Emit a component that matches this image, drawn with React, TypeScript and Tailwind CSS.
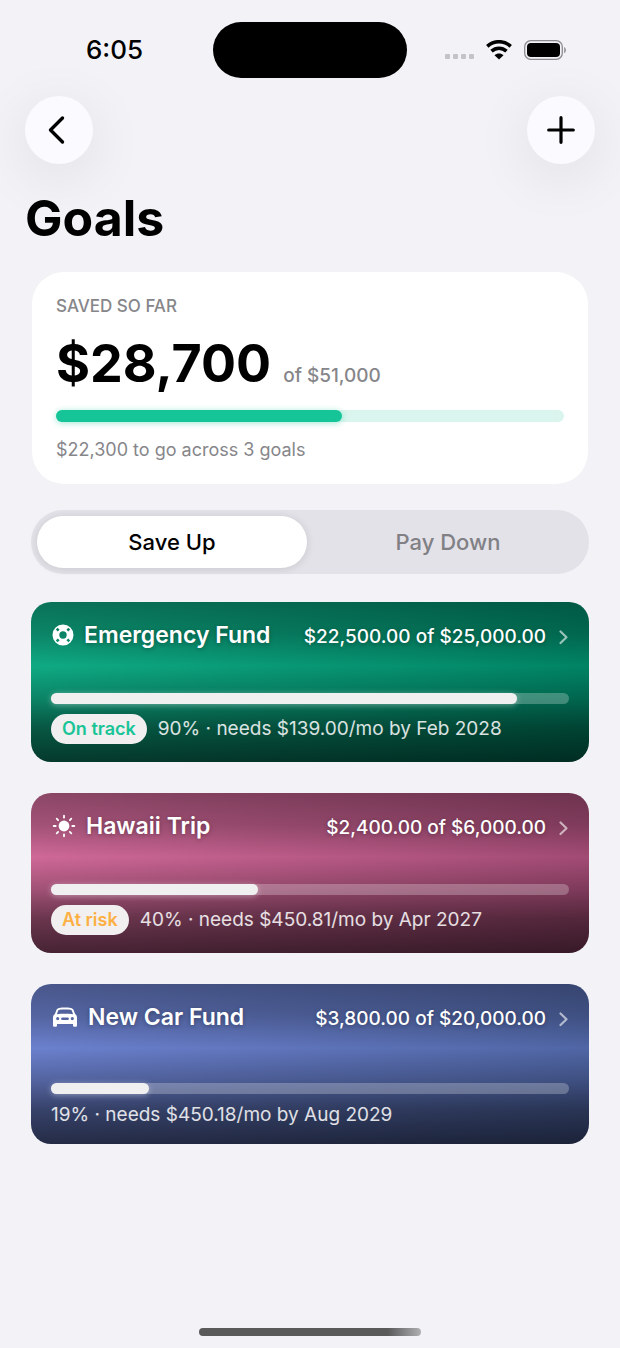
import React, { useState } from "react";
import clsx from "clsx";

type Goal = {
    name: string;
    icon: React.ReactNode;
    amount: string;
    percent: number;
    detail: string;
    status?: { label: string; className: string };
    background: string;
};

// Filled disc with the ring hole and the four strap notches cut out
const LifebuoyIcon = () => (
    <svg width="22" height="22" viewBox="0 0 22 22" aria-hidden="true">
        <path
            fill="white"
            fillRule="evenodd"
            d="M11 .5a10.500 10.500 0 1 1 0 21a10.500 10.500 0 0 1 0-21Z
               M11 7.300a3.700 3.700 0 1 0 0 7.400a3.700 3.700 0 0 0 0-7.400Z
               M5.600 3.800L7.600 5.700L5.700 7.600L3.800 5.600Z
               M16.400 3.800L18.200 5.600L16.300 7.600L14.400 5.700Z
               M3.800 16.400L5.700 14.400L7.600 16.300L5.600 18.200Z
               M18.200 16.400L16.400 18.200L14.400 16.300L16.300 14.400Z"
        />
    </svg>
);

const SunIcon = () => (
    <svg width="24" height="24" viewBox="0 0 24 24" aria-hidden="true">
        <circle cx="12" cy="12" r="5.400" fill="white" />
        <path
            stroke="white"
            strokeWidth="1.800"
            strokeLinecap="round"
            d="M12 1.700v2M12 20.300v2M1.700 12h2M20.300 12h2M4.700 4.700l1.400 1.400M17.900 17.900l1.400 1.400M4.700 19.300l1.400-1.400M17.900 6.100l1.400-1.400"
        />
    </svg>
);

const CarIcon = () => (
    <svg width="26" height="22" viewBox="0 0 26 22" aria-hidden="true">
        <path
            fill="white"
            fillRule="evenodd"
            d="M7.200 1.900C10.500 1.400 15.500 1.400 18.800 1.900C20.200 2.100 21.100 2.800 21.600 4.100L23 7.700C24.400 8.900 25 10.100 25 11.800V19.500A1.300 1.300 0 0 1 23.700 20.800H22.300A1.300 1.300 0 0 1 21 19.500V18H5V19.500A1.300 1.300 0 0 1 3.700 20.800H2.300A1.300 1.300 0 0 1 1 19.500V11.800C1 10.100 1.600 8.900 3 7.700L4.400 4.100C4.900 2.800 5.800 2.100 7.200 1.900Z
               M7.500 3.700C6.700 3.800 6.300 4.200 6 5L4.900 8.200C10 7.600 16 7.600 21.100 8.200L20 5C19.700 4.200 19.300 3.800 18.500 3.700C15.500 3.300 10.500 3.300 7.500 3.700Z
               M5.700 11a1.600 1.600 0 1 0 0 3.200a1.600 1.600 0 0 0 0-3.200Z
               M20.300 11a1.600 1.600 0 1 0 0 3.200a1.600 1.600 0 0 0 0-3.200Z
               M10.300 11.500a1.200 1.200 0 0 0 0 2.400H15.700a1.200 1.200 0 0 0 0-2.400Z"
        />
    </svg>
);

const goals: Goal[] = [
    {
        name: "Emergency Fund",
        icon: <LifebuoyIcon />,
        amount: "$22,500.00 of $25,000.00",
        percent: 90,
        detail: "90% · needs $139.00/mo by Feb 2028",
        status: { label: "On track", className: "text-[#19c497]" },
        background:
            "bg-[linear-gradient(to_bottom,rgba(0,0,0,.33),rgba(0,0,0,.22)_20%,transparent_40%,rgba(0,0,0,.22)_60%,rgba(0,0,0,.48)_78%,rgba(0,0,0,.66)),linear-gradient(100deg,#0fab84,#008263)]",
    },
    {
        name: "Hawaii Trip",
        icon: <SunIcon />,
        amount: "$2,400.00 of $6,000.00",
        percent: 40,
        detail: "40% · needs $450.81/mo by Apr 2027",
        status: { label: "At risk", className: "text-[#fdb044]" },
        background:
            "bg-[linear-gradient(to_bottom,rgba(0,0,0,.33),rgba(0,0,0,.22)_20%,transparent_40%,rgba(0,0,0,.22)_60%,rgba(0,0,0,.48)_78%,rgba(0,0,0,.66)),linear-gradient(100deg,#d06998,#a14a73)]",
    },
    {
        name: "New Car Fund",
        icon: <CarIcon />,
        amount: "$3,800.00 of $20,000.00",
        percent: 19,
        detail: "19% · needs $450.18/mo by Aug 2029",
        background:
            "bg-[linear-gradient(to_bottom,rgba(0,0,0,.33),rgba(0,0,0,.22)_20%,transparent_40%,rgba(0,0,0,.22)_60%,rgba(0,0,0,.48)_78%,rgba(0,0,0,.66)),linear-gradient(100deg,#6c81cf,#4f65a4)]",
    },
];

const StatusBar = () => (
    <div className="grid grid-cols-[1fr_194px_1fr] items-center pt-[22px] text-black">
        <div className="pl-4 text-center text-[26px] leading-8 font-medium">6:05</div>
        <div className="h-14 rounded-full bg-black" />
        <div className="flex items-center justify-center gap-3 pr-4">
            <div className="flex gap-[3px] pt-3">
                <span className="size-[5px] rounded-[1px] bg-[#c3c3c8]" />
                <span className="size-[5px] rounded-[1px] bg-[#c3c3c8]" />
                <span className="size-[5px] rounded-[1px] bg-[#c3c3c8]" />
                <span className="size-[5px] rounded-[1px] bg-[#c3c3c8]" />
            </div>
            <svg width="26" height="20" viewBox="0 0 26 20" fill="none" aria-hidden="true">
                <path d="M1.300 6.300C8 .2 18 .2 24.700 6.300" stroke="black" strokeWidth="3.600" />
                <path d="M5.500 11.200C10 7.200 16 7.200 20.500 11.200" stroke="black" strokeWidth="3.600" />
                <path d="M13 19.500L8.500 15.300C11 13 15 13 17.500 15.300Z" fill="black" />
            </svg>
            <svg width="43" height="20" viewBox="0 0 43 20" fill="none" aria-hidden="true">
                <rect x=".7" y=".7" width="37.600" height="18.600" rx="6" stroke="#8c8c90" strokeWidth="1.300" />
                <rect x="3" y="3" width="33" height="14" rx="4" fill="black" />
                <path d="M40.200 7v6.200c2.200-1 2.200-5.200 0-6.200Z" fill="#8c8c90" />
            </svg>
        </div>
    </div>
);

const GoalCard = ({ goal }: { goal: Goal }) => (
    <a
        href="#"
        className={clsx(
            "flex min-h-[160px] flex-col justify-between rounded-[20px] px-5 pt-[18px] pb-[18px] text-white",
            goal.background
        )}
    >
        <div className="flex items-center justify-between">
            <h2 className="flex items-center gap-[10px] pl-px text-[23px] leading-[30px] font-semibold [text-shadow:0_1px_4px_rgba(0,0,0,.3)]">
                {goal.icon}
                {goal.name}
            </h2>
            <div className="flex items-center gap-3 pt-1 text-[19px] leading-6 font-medium">
                <span className="[text-shadow:0_1px_4px_rgba(0,0,0,.3)]">{goal.amount}</span>
                <svg width="11" height="16" viewBox="0 0 11 16" fill="none" aria-hidden="true">
                    <path d="M2.500 2.500L8.500 8.300L2.500 14" stroke="white" strokeOpacity=".6" strokeWidth="2.200" strokeLinecap="round" strokeLinejoin="round" />
                </svg>
            </div>
        </div>

        <div>
            <div
                role="progressbar"
                aria-label={goal.name}
                aria-valuenow={goal.percent}
                className="h-[11px] rounded-full bg-white/25"
            >
                <div
                    className="h-full rounded-full bg-[#f0f0f0] shadow-[0_1px_6px_rgba(255,255,255,.4)]"
                    style={{ width: `${goal.percent}%` }}
                />
            </div>
            <div className="mt-[10px] flex items-center gap-[11px] text-[19px] text-white/85">
                {goal.status && (
                    <span
                        className={clsx(
                            "rounded-full bg-[#f1efef] px-[11px] text-[18px] leading-[30px] font-semibold",
                            goal.status.className
                        )}
                    >
                        {goal.status.label}
                    </span>
                )}
                <span className="leading-[22px]">{goal.detail}</span>
            </div>
        </div>
    </a>
);

export default function App() {
    const [tab, setTab] = useState("Save Up");

    return (
        <div className="flex min-h-screen flex-col bg-[#f2f2f7] font-['Inter',sans-serif] text-black">
            <StatusBar />

            {/* Nav buttons */}
            <header className="px-[25px] pt-[18px]">
                <div className="flex justify-between">
                    <button aria-label="Back" className="flex size-[68px] items-center justify-center rounded-full bg-[#fafaff] shadow-[0_12px_60px_rgba(0,0,0,.09)]">
                        <svg width="28" height="32" viewBox="0 0 28 32" fill="none" aria-hidden="true">
                            <path d="M17.500 4L5.500 16L17.500 28" stroke="black" strokeWidth="3.400" strokeLinecap="round" strokeLinejoin="round" />
                        </svg>
                    </button>
                    <button aria-label="Add goal" className="flex size-[68px] items-center justify-center rounded-full bg-[#fafaff] shadow-[0_12px_60px_rgba(0,0,0,.09)]">
                        <svg width="28" height="28" viewBox="0 0 28 28" fill="none" aria-hidden="true">
                            <path d="M14 1.700v24.600M1.700 14h24.600" stroke="black" strokeWidth="3.200" strokeLinecap="round" />
                        </svg>
                    </button>
                </div>
                <h1 className="mt-6 text-[50px] leading-[60px] font-bold">Goals</h1>
            </header>

            <main className="px-[31px] pt-6">
                {/* Totals */}
                <section className="mx-px rounded-[32px] bg-white px-6 pt-[22px] pb-[22px] text-[#86868a]">
                    <p className="text-[17px] leading-6 font-medium">SAVED SO FAR</p>
                    <div className="mt-4 flex items-baseline gap-3">
                        <span className="text-[52px] leading-[60px] font-bold text-black">$28,700</span>
                        <span className="text-[19px] leading-6 font-medium">of $51,000</span>
                    </div>
                    <div
                        role="progressbar"
                        aria-label="Saved so far"
                        aria-valuenow={56}
                        className="mt-4 h-3 rounded-full bg-[#d9f5ed]"
                    >
                        <div className="h-full w-[56.300%] rounded-full bg-[#15c598] shadow-[0_1px_6px_rgba(21,197,152,.4)]" />
                    </div>
                    <p className="mt-4 text-[18px] leading-6">$22,300 to go across 3 goals</p>
                </section>

                {/* Segmented control */}
                <div role="tablist" className="mt-[26px] grid grid-cols-2 gap-[6px] rounded-full bg-[#e3e2e8] p-[6px] text-[22px] leading-[52px] font-medium">
                    {["Save Up", "Pay Down"].map((label) => (
                        <button
                            key={label}
                            role="tab"
                            aria-selected={tab === label}
                            onClick={() => setTab(label)}
                            className={clsx(
                                "rounded-full",
                                tab === label ? "bg-white text-black shadow-[0_1px_8px_rgba(0,0,0,.12)]" : "text-[#808085]"
                            )}
                        >
                            {label}
                        </button>
                    ))}
                </div>

                <div className="mt-7 flex flex-col gap-[31px]">
                    {goals.map((goal) => (
                        <GoalCard key={goal.name} goal={goal} />
                    ))}
                </div>
            </main>

            {/* Home indicator */}
            <div className="mx-auto mt-auto mb-3 h-2 w-[222px] rounded-full bg-linear-to-r from-[#5a5a5b] from-85% to-[#b0b0b3]" />
        </div>
    );
}
